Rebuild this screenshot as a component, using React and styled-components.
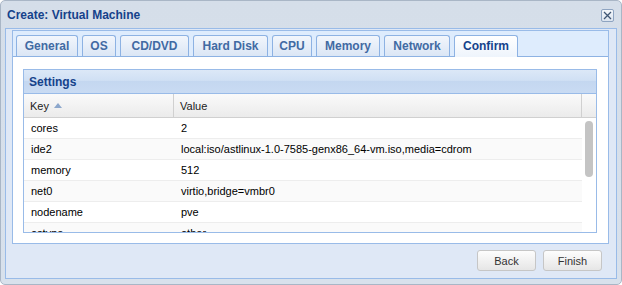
import React from "react"
import styled, { createGlobalStyle } from "styled-components"

const GlobalStyle = createGlobalStyle`
  html, body {
    margin: 0;
    padding: 0;
    background: #ffffff;
  }
  * {
    box-sizing: border-box;
  }
`

const Window = styled.div`
  width: 622px;
  height: 285px;
  display: flex;
  flex-direction: column;
  background: linear-gradient(#d5dee9, #d8e1ec);
  border: 1px solid #a9b6c6;
  border-radius: 5px;
  padding: 0 4px 5px 4px;
  font-family: "Liberation Sans", Arial, sans-serif;
  font-size: 11px;
`

const Header = styled.div`
  height: 27px;
  display: flex;
  align-items: center;
  justify-content: space-between;
  padding: 0 3px 0 2px;
`

const Title = styled.div`
  font-weight: bold;
  font-size: 12px;
  color: #15428b;
`

const CloseButton = styled.div`
  width: 13px;
  height: 13px;
  border: 1px solid #8ea4c1;
  border-radius: 2px;
  background: linear-gradient(#f4f7fb, #dbe4ef);
  display: flex;
  align-items: center;
  justify-content: center;
  margin-top: 2px;
`

const Body = styled.div`
  flex: 1;
  min-height: 0;
  display: flex;
  flex-direction: column;
  border: 1px solid #99bbe8;
  background: #dfe8f6;
  padding: 1px 7px 7px 6px;
`

const TabPanel = styled.div`
  display: flex;
  flex-direction: column;
  border: 1px solid #99bbe8;
  height: 214px;
`

const TabStrip = styled.div`
  display: flex;
  align-items: flex-end;
  gap: 4px;
  padding: 4px 0 0 3px;
  background: #deecfd;
  border-bottom: 1px solid #8db2e3;
  height: 26px;
  flex: none;
`

const Tab = styled.div`
  width: ${(p) => p.$w}px;
  display: flex;
  align-items: center;
  justify-content: center;
  font-weight: bold;
  font-size: 12px;
  border: 1px solid #8db2e3;
  border-bottom: none;
  border-radius: 3px 3px 0 0;
  color: ${(p) => (p.$active ? "#15428b" : "#416aa3")};
  background: ${(p) =>
    p.$active
      ? "linear-gradient(#ffffff, #eef4fc)"
      : "linear-gradient(#f2f6fc, #dbe6f5)"};
  margin-bottom: ${(p) => (p.$active ? "-1px" : "0")};
  height: ${(p) => (p.$active ? "22px" : "21px")};
  padding-bottom: ${(p) => (p.$active ? "1px" : "0")};
`

const TabBody = styled.div`
  flex: 1;
  min-height: 0;
  background: #ffffff;
  padding: 12px 11px 10px 10px;
  display: flex;
`

const Grid = styled.div`
  flex: 1;
  min-height: 0;
  display: flex;
  flex-direction: column;
  border: 1px solid #99bbe8;
  overflow: hidden;
`

const GridTitle = styled.div`
  height: 24px;
  flex: none;
  display: flex;
  align-items: center;
  padding-left: 5px;
  font-weight: bold;
  font-size: 12px;
  color: #15428b;
  background: linear-gradient(#dce8f7 0%, #d0e0f4 45%, #c4d7f0 50%, #c9dbf3 100%);
  border-bottom: 1px solid #99bbe8;
`

const HeaderRow = styled.div`
  height: 24px;
  flex: none;
  display: flex;
  background: linear-gradient(#fafafa, #ebebeb);
  border-bottom: 1px solid #d0d0d0;
  color: #222;
`

const HeaderCell = styled.div`
  width: ${(p) => p.$w}px;
  flex: ${(p) => (p.$w ? "none" : 1)};
  display: flex;
  align-items: center;
  gap: 5px;
  padding-left: 6px;
  border-right: 1px solid #d0d0d0;
`

const Spacer = styled.div`
  width: 14px;
`

const GridBody = styled.div`
  flex: 1;
  min-height: 0;
  display: flex;
  overflow: hidden;
`

const Rows = styled.div`
  flex: 1;
  display: flex;
  flex-direction: column;
`

const Row = styled.div`
  height: 21px;
  flex: none;
  display: flex;
  align-items: center;
  border-bottom: 1px solid #ededed;
  background: ${(p) => (p.$alt ? "#fafafa" : "#ffffff")};
  color: #000;
`

const Cell = styled.div`
  width: ${(p) => p.$w}px;
  flex: ${(p) => (p.$w ? "none" : 1)};
  padding-left: 7px;
  white-space: nowrap;
`

const ScrollTrack = styled.div`
  width: 14px;
  padding: 3px 3px 0 3px;
`

const ScrollThumb = styled.div`
  width: 8px;
  height: 56px;
  border-radius: 4px;
  background: #c4c4c4;
`

const Footer = styled.div`
  display: flex;
  justify-content: flex-end;
  gap: 7px;
  padding: 6px 7px 0 0;
`

const Button = styled.div`
  width: 59px;
  height: 21px;
  display: flex;
  align-items: center;
  justify-content: center;
  border: 1px solid #c6c6c6;
  border-radius: 3px;
  background: linear-gradient(#fdfdfd, #e6e6e6);
  color: #333;
  font-size: 11px;
`

const tabs = [
  { name: "General", w: 62 },
  { name: "OS", w: 34 },
  { name: "CD/DVD", w: 69 },
  { name: "Hard Disk", w: 75 },
  { name: "CPU", w: 40 },
  { name: "Memory", w: 64 },
  { name: "Network", w: 66 },
  { name: "Confirm", w: 64, active: true },
]

const settings = [
  ["cores", "2"],
  ["ide2", "local:iso/astlinux-1.0-7585-genx86_64-vm.iso,media=cdrom"],
  ["memory", "512"],
  ["net0", "virtio,bridge=vmbr0"],
  ["nodename", "pve"],
  ["ostype", "other"],
  ["sockets", "1"],
]

const App = () => {
  return (
    <>
      <GlobalStyle />
      <Window>
        <Header>
          <Title>Create: Virtual Machine</Title>
          <CloseButton>
            <svg width="9" height="9" viewBox="0 0 9 9">
              <path d="M1 1 L8 8 M8 1 L1 8" stroke="#3f5673" strokeWidth="1.3" />
            </svg>
          </CloseButton>
        </Header>
        <Body>
          <TabPanel>
            <TabStrip>
              {tabs.map((t) => (
                <Tab key={t.name} $w={t.w} $active={t.active}>
                  {t.name}
                </Tab>
              ))}
            </TabStrip>
            <TabBody>
              <Grid>
                <GridTitle>Settings</GridTitle>
                <HeaderRow>
                  <HeaderCell $w={150}>
                    Key
                    <svg width="8" height="5" viewBox="0 0 8 5">
                      <path d="M0 5 L4 0 L8 5 Z" fill="#8ca7cc" />
                    </svg>
                  </HeaderCell>
                  <HeaderCell>Value</HeaderCell>
                  <Spacer />
                </HeaderRow>
                <GridBody>
                  <Rows>
                    {settings.map(([k, v], i) => (
                      <Row key={k} $alt={i % 2 === 1}>
                        <Cell $w={150}>{k}</Cell>
                        <Cell>{v}</Cell>
                      </Row>
                    ))}
                  </Rows>
                  <ScrollTrack>
                    <ScrollThumb />
                  </ScrollTrack>
                </GridBody>
              </Grid>
            </TabBody>
          </TabPanel>
          <Footer>
            <Button>Back</Button>
            <Button>Finish</Button>
          </Footer>
        </Body>
      </Window>
    </>
  )
}

export default App
